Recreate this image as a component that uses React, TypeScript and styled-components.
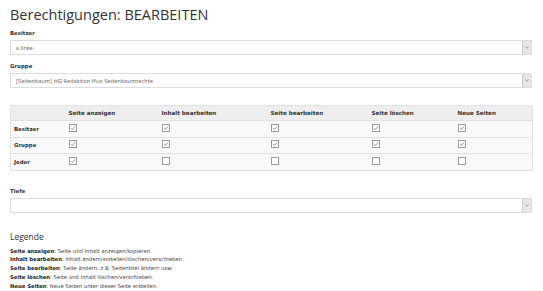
import React from 'react';
import styled, { createGlobalStyle } from 'styled-components';

const Global = createGlobalStyle`
  html, body {
    margin: 0;
    padding: 0;
    background: #fff;
  }
  body {
    font-family: "DejaVu Sans", Verdana, sans-serif;
    font-size: 5.4px;
    color: #333;
  }
`;

const Page = styled.div`
  padding: 5px 11px 0 10px;
  display: flex;
  flex-direction: column;
`;

const Title = styled.h1`
  margin: 0 0 4px 0;
  font-family: "Open Sans", sans-serif;
  font-weight: 400;
  font-size: 14.5px;
  line-height: 20px;
  color: #333;
`;

const Field = styled.div<{ $gap?: number }>`
  display: flex;
  flex-direction: column;
  gap: 3px;
  margin-bottom: ${(p) => p.$gap ?? 7}px;
`;

const Label = styled.label`
  font-weight: bold;
  font-size: 5.4px;
  line-height: 8px;
  color: #333;
`;

const SelectBox = styled.div`
  height: 15px;
  box-sizing: border-box;
  border: 1px solid #ddd;
  background: #fff;
  display: flex;
  align-items: center;
  justify-content: space-between;
  padding-left: 5px;
  font-size: 5.3px;
  color: #666;
`;

const Arrow = styled.span`
  width: 8px;
  align-self: stretch;
  background: #e6e6e6;
  border-left: 1px solid #ccc;
  display: flex;
  align-items: center;
  justify-content: center;
`;

const Table = styled.table`
  width: 100%;
  table-layout: fixed;
  border-collapse: collapse;
  border: 1px solid #e2e2e2;
  margin-top: 10px;
  margin-bottom: 16px;
  font-size: 5.4px;
`;

const Th = styled.th`
  background: #eee;
  text-align: left;
  font-weight: bold;
  font-size: 5.6px;
  height: 14px;
  padding: 0 0 0 4px;
  color: #333;
`;

const Tr = styled.tr`
  border-top: 1px solid #e2e2e2;
`;

const RowHead = styled.td`
  font-weight: bold;
  background: #f9f9f9;
  padding: 0 0 0 3px;
  height: 15.5px;
  color: #333;
`;

const Cell = styled.td`
  background: #f9f9f9;
  padding: 0 0 0 4px;
  vertical-align: middle;
`;

const Box = styled.span`
  display: inline-block;
  width: 6px;
  height: 6px;
  border: 1px solid #999;
  background: #fff;
  vertical-align: middle;
  position: relative;
  top: -1px;
`;

const Legend = styled.h2`
  margin: 18px 0 4px 0;
  font-family: "Open Sans", sans-serif;
  font-weight: 400;
  font-size: 8.5px;
  line-height: 12px;
  color: #333;
`;

const LegendLine = styled.div`
  font-size: 5.3px;
  line-height: 8.8px;
  color: #444;
  white-space: nowrap;
  b {
    color: #222;
  }
`;

const cols = ['Seite anzeigen', 'Inhalt bearbeiten', 'Seite bearbeiten', 'Seite löschen', 'Neue Seiten'];
const colWidths = [54, 93, 109, 101, 86, 79];
const rows: { name: string; vals: boolean[] }[] = [
  { name: 'Besitzer', vals: [true, true, true, true, true] },
  { name: 'Gruppe', vals: [true, true, true, true, true] },
  { name: 'Jeder', vals: [true, false, false, false, false] },
];

const Check = ({ on }: { on: boolean }) => (
  <Box>
    {on && (
      <svg width="6" height="6" viewBox="0 0 6 6" style={{ position: 'absolute', left: 0, top: 0 }}>
        <path d="M1 3.2 L2.4 4.6 L5 1.4" fill="none" stroke="#777" strokeWidth="0.8" />
      </svg>
    )}
  </Box>
);

const Select = ({ value }: { value?: string }) => (
  <SelectBox>
    <span>{value}</span>
    <Arrow>
      <svg width="4" height="3" viewBox="0 0 4 3">
        <path d="M0.5 0.5 L2 2.2 L3.5 0.5" fill="none" stroke="#888" strokeWidth="0.7" />
      </svg>
    </Arrow>
  </SelectBox>
);

export default function App() {
  return (
    <>
      <Global />
      <Page>
        <Title>Berechtigungen: BEARBEITEN</Title>
        <Field>
          <Label>Besitzer</Label>
          <Select value="s.linke" />
        </Field>
        <Field>
          <Label>Gruppe</Label>
          <Select value="[Seitenbaum] HG Redaktion Plus Seitenbaumrechte" />
        </Field>
        <Table>
          <colgroup>
            {colWidths.map((w, i) => (
              <col key={i} style={{ width: w }} />
            ))}
          </colgroup>
          <thead>
            <tr>
              <Th />
              {cols.map((c) => (
                <Th key={c}>{c}</Th>
              ))}
            </tr>
          </thead>
          <tbody>
            {rows.map((r) => (
              <Tr key={r.name}>
                <RowHead>{r.name}</RowHead>
                {r.vals.map((v, i) => (
                  <Cell key={i}>
                    <Check on={v} />
                  </Cell>
                ))}
              </Tr>
            ))}
          </tbody>
        </Table>
        <Field $gap={0}>
          <Label>Tiefe</Label>
          <Select />
        </Field>
        <Legend>Legende</Legend>
        <LegendLine><b>Seite anzeigen</b>: Seite und Inhalt anzeigen/kopieren.</LegendLine>
        <LegendLine><b>Inhalt bearbeiten</b>: Inhalt ändern/erstellen/löschen/verschieben.</LegendLine>
        <LegendLine><b>Seite bearbeiten</b>: Seite ändern, z.B. Seitentitel ändern usw.</LegendLine>
        <LegendLine><b>Seite löschen</b>: Seite und Inhalt löschen/verschieben.</LegendLine>
        <LegendLine><b>Neue Seiten</b>: Neue Seiten unter dieser Seite erstellen.</LegendLine>
      </Page>
    </>
  );
}
